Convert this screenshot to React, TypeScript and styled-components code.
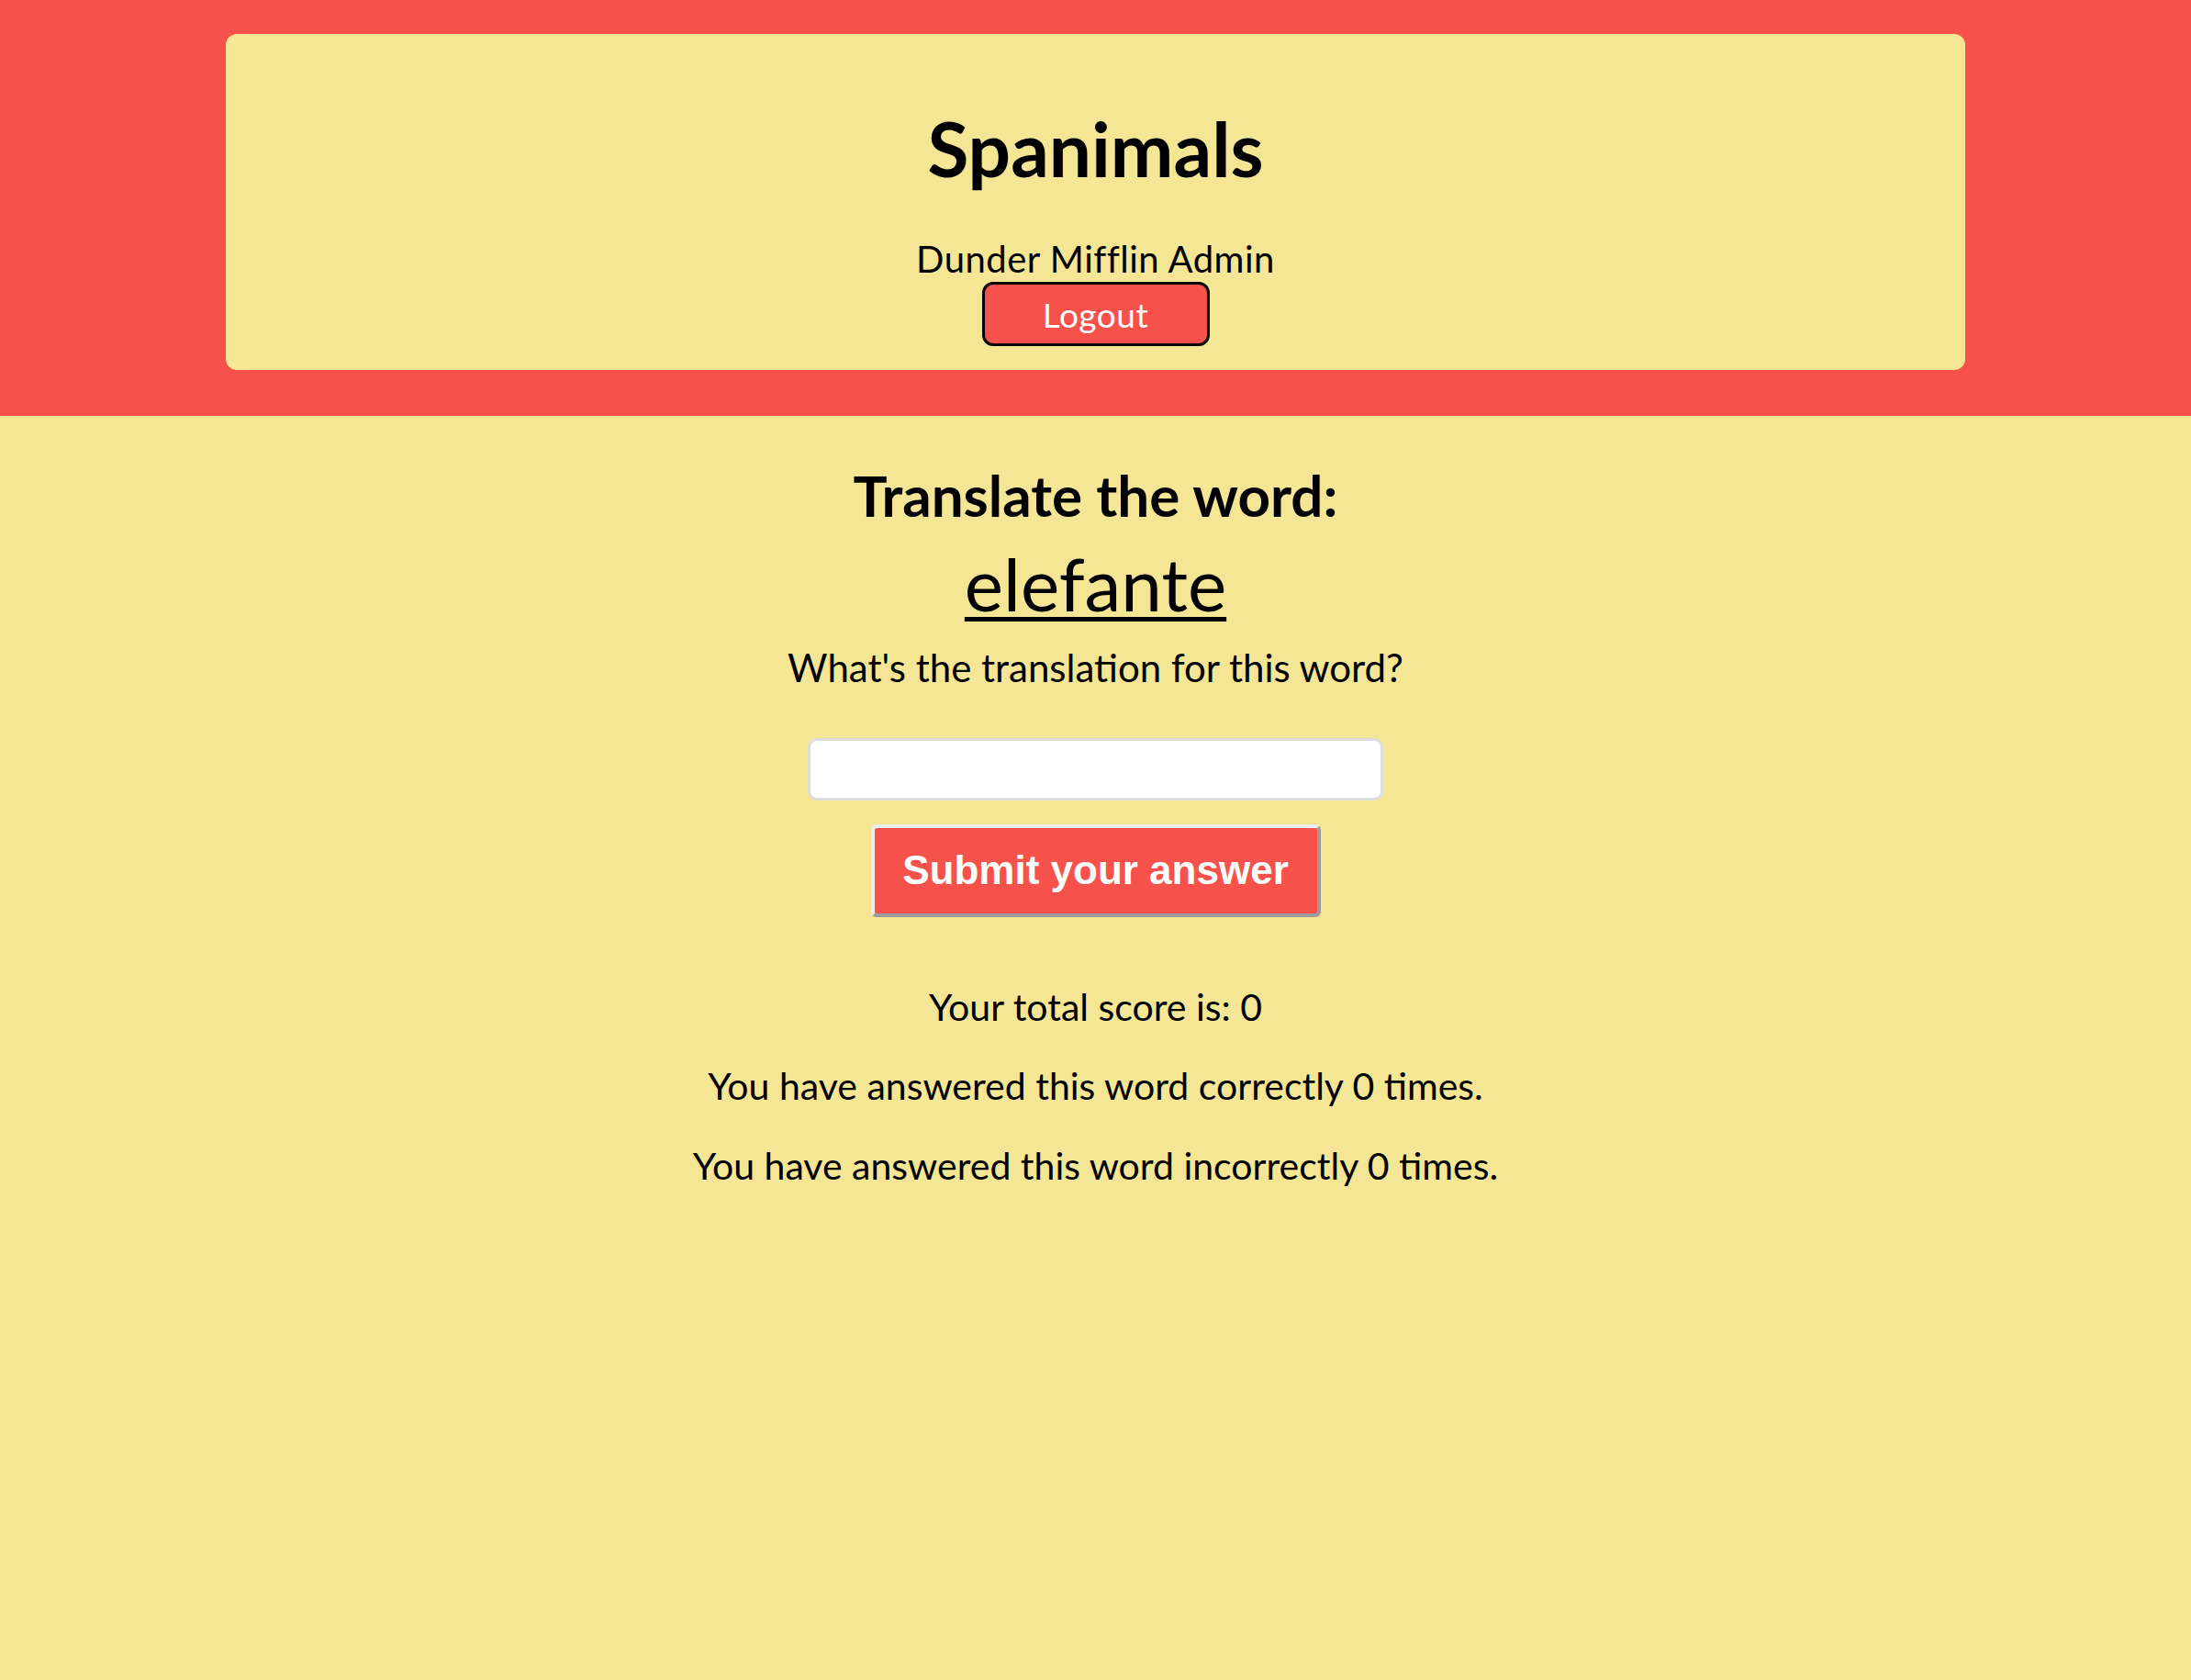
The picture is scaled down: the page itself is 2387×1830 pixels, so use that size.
import React from "react";
import styled, { createGlobalStyle } from "styled-components";

const RED = "#f6514b";
const YELLOW = "#f5e695";

const GlobalStyle = createGlobalStyle`
  html, body {
    margin: 0;
    padding: 0;
    background: ${YELLOW};
    font-family: Lato, "Noto Sans", sans-serif;
    color: #000;
  }
  * { box-sizing: border-box; }
`;

const Header = styled.header`
  background: ${RED};
  padding: 37px 0 50px;
`;

const Card = styled.div`
  width: 1895px;
  margin: 0 auto;
  background: ${YELLOW};
  border-radius: 12px;
  display: flex;
  flex-direction: column;
  align-items: center;
  padding: 83px 0 26px;
`;

const Title = styled.h1`
  margin: 0;
  font-size: 82px;
  line-height: 82px;
  font-weight: 700;
`;

const UserName = styled.p`
  margin: 56px 0 0;
  font-size: 40px;
  line-height: 1.2;
  letter-spacing: 0.5px;
`;

const LogoutButton = styled.button`
  width: 248px;
  height: 70px;
  margin-top: 1px;
  background: ${RED};
  color: #fff;
  border: 3px solid #000;
  border-radius: 12px;
  font-family: Lato, "Noto Sans", sans-serif;
  font-size: 37px;
  letter-spacing: 0.5px;
  cursor: pointer;
`;

const Main = styled.main`
  display: flex;
  flex-direction: column;
  align-items: center;
  padding-top: 49px;
`;

const Prompt = styled.h2`
  margin: 0;
  font-size: 62px;
  line-height: 1.2;
  font-weight: 700;
`;

const Word = styled.a`
  margin-top: 11px;
  font-size: 80px;
  line-height: 1.2;
  color: #000;
  text-decoration: underline;
  text-decoration-thickness: 5px;
  text-underline-offset: 6px;
`;

const Question = styled.p`
  margin: 19px 0 0;
  font-size: 42px;
  line-height: 1.2;
`;

const AnswerInput = styled.input`
  margin-top: 51px;
  width: 627px;
  height: 68px;
  background: #fff;
  border: 3px solid #dedede;
  border-radius: 10px;
  font-size: 32px;
  padding: 0 14px;
  outline: none;
`;

const SubmitButton = styled.button`
  margin-top: 26px;
  width: 490px;
  height: 101px;
  background: ${RED};
  color: #fff;
  border-style: solid;
  border-width: 4px;
  border-color: #ececec #9c9c9c #9c9c9c #ececec;
  border-radius: 6px;
  font-family: "Liberation Sans", Arial, sans-serif;
  font-weight: 700;
  font-size: 44px;
  cursor: pointer;
`;

const Stat = styled.p<{ $gap: number }>`
  margin: ${(p) => p.$gap}px 0 0;
  font-size: 41px;
  line-height: 1.2;
`;

export default function App() {
  return (
    <>
      <GlobalStyle />
      <Header>
        <Card>
          <Title>Spanimals</Title>
          <UserName>Dunder Mifflin Admin</UserName>
          <LogoutButton>Logout</LogoutButton>
        </Card>
      </Header>
      <Main>
        <Prompt>Translate the word:</Prompt>
        <Word href="#">elefante</Word>
        <Question>What's the translation for this word?</Question>
        <AnswerInput type="text" />
        <SubmitButton>Submit your answer</SubmitButton>
        <Stat $gap={73}>Your total score is: 0</Stat>
        <Stat $gap={37}>You have answered this word correctly 0 times.</Stat>
        <Stat $gap={38}>You have answered this word incorrectly 0 times.</Stat>
      </Main>
    </>
  );
}
